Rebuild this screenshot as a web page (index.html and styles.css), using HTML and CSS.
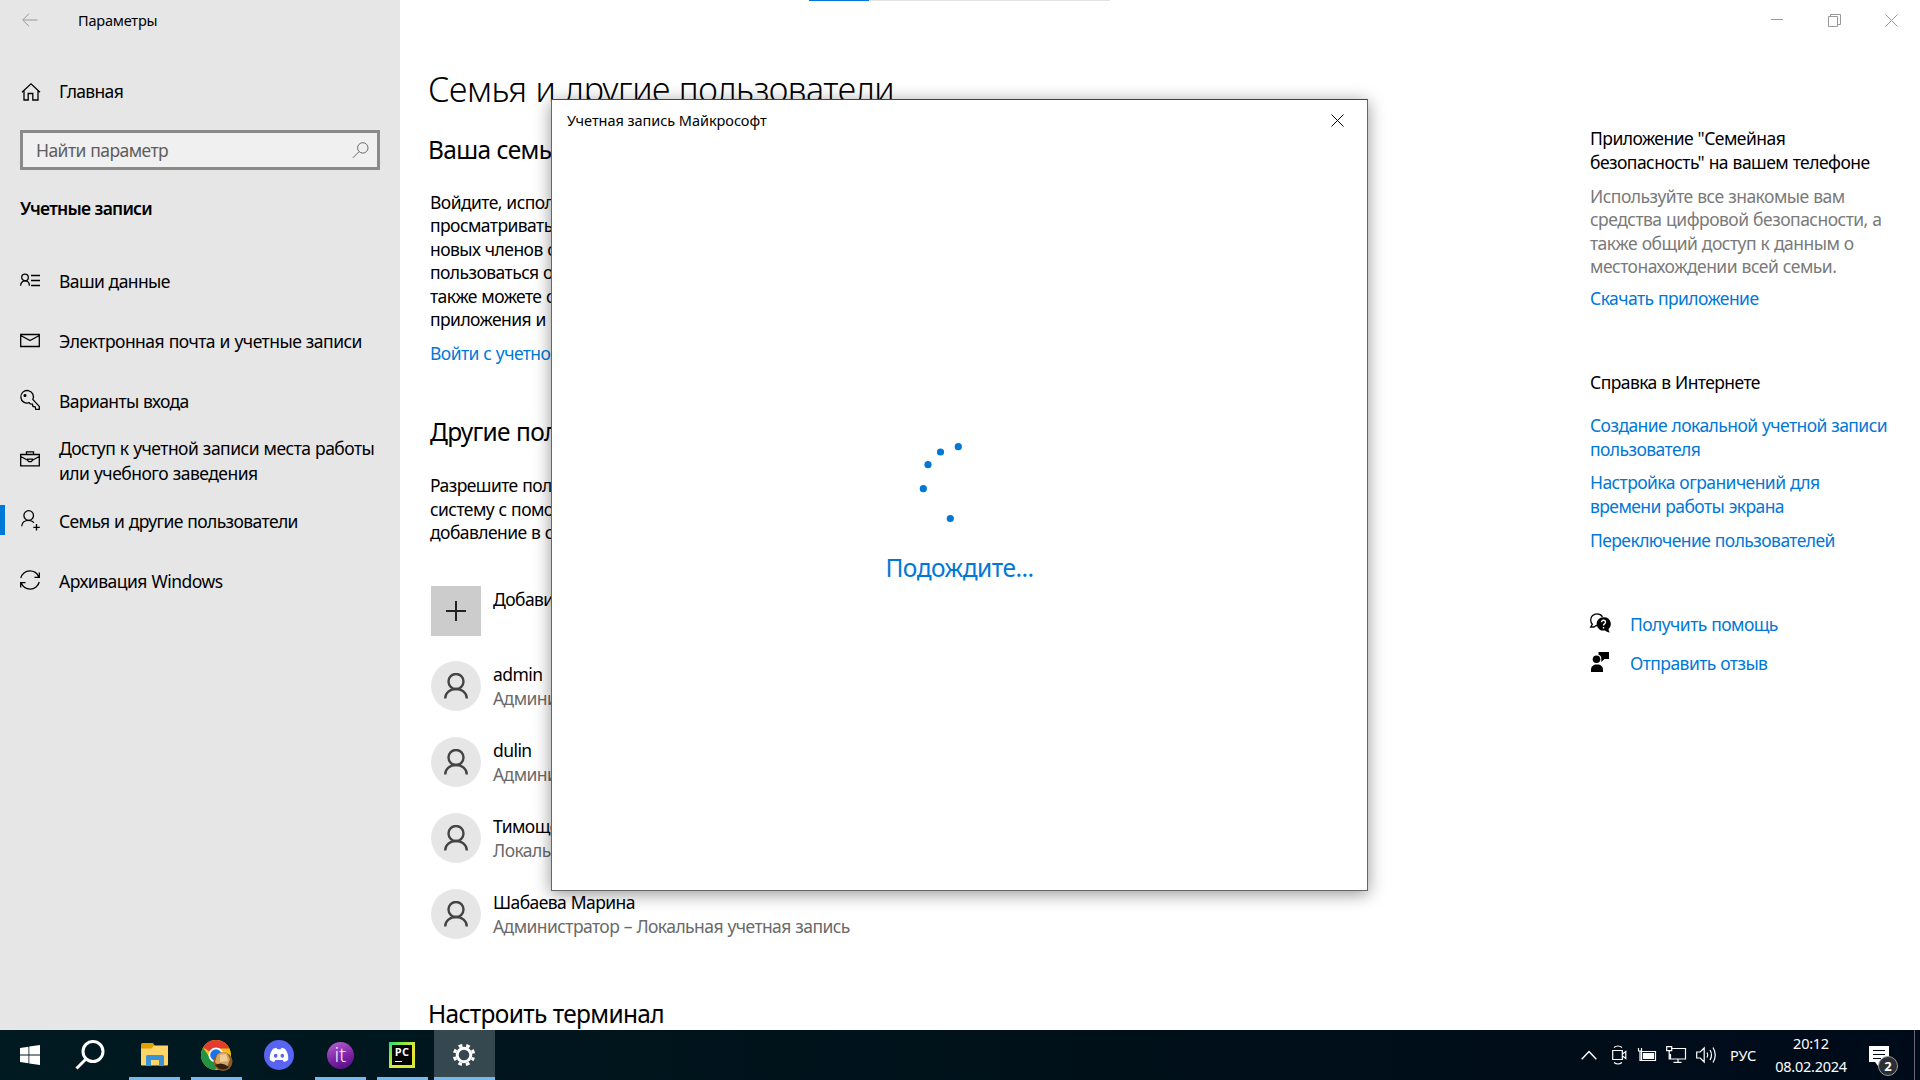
FILE: index.html
```html
<!DOCTYPE html>
<html lang="ru">
<head>
<meta charset="utf-8">
<title>Параметры</title>
<link rel="stylesheet" href="styles.css">
</head>
<body>
<svg class="defs" aria-hidden="true">
  <symbol id="person" viewBox="0 0 24 26"><circle cx="12" cy="8.5" r="7.5"/><path d="M1.2 25.5C1.2 20 6 16 12 16s10.800 4 10.800 9.500"/></symbol>
</svg>
<div class="window">
  <aside class="sidebar">
    <header class="titlebar">
      <svg class="back" width="16" height="14" viewBox="0 0 16 14"><path d="M15.500 7H1M7 .7.700 7 7 13.300"/></svg>
      <span>Параметры</span>
    </header>
    <a class="home">
      <svg class="ico" width="20" height="20" viewBox="0 0 20 20"><path d="M2 10.200 11 1.800l9 8.400M4 8.600V18h4.200v-6.500h4.600V18H18V8.600"/></svg>
      <span>Главная</span>
    </a>
    <div class="search">
      <span>Найти параметр</span>
      <svg width="17" height="17" viewBox="0 0 17 17"><circle cx="10.800" cy="5.900" r="5.200"/><path d="M7 9.700.8 15.900"/></svg>
    </div>
    <h2 class="group">Учетные записи</h2>
    <nav class="nav">
      <a class="item"><svg class="ico" width="20" height="20" viewBox="0 0 20 20"><circle cx="5" cy="7.500" r="3.300"/><path d="M.6 15.800c0-3 1.900-4.900 4.400-4.900s4.400 1.900 4.400 4.900M11 5.500h9M11 10.500h9M11 15.500h9"/></svg><span>Ваши данные</span></a>
      <a class="item"><svg class="ico" width="20" height="20" viewBox="0 0 20 20"><path d="M.7 4.500h18.600v12H.7zM.7 5.500l9.300 5 9.300-5"/></svg><span class="wide">Электронная почта и учетные записи</span></a>
      <a class="item"><svg class="ico" width="20" height="20" viewBox="0 0 20 20"><path d="M12.800 9.500a6.300 6.300 0 1 0-3.500 3.200l1 1.300 2.200.2.400 2.300 2.200.3.700 2.600h3.500v-3z"/><circle cx="5" cy="5.500" r=".9" fill="#000"/></svg><span>Варианты входа</span></a>
      <a class="item two"><svg class="ico" width="20" height="20" viewBox="0 0 20 20"><path d="M.7 4.500h18.600v11.300H.7zM6.500 4.500v-2.700h7v2.700M.7 6.500l7 3.800M12.300 10.300l7-3.800M7.700 9.200h4.600v1.400l-1.100 1.100H8.800l-1.100-1.100z"/></svg><span class="wide">Доступ к учетной записи места работы<br>или учебного заведения</span></a>
      <a class="item active"><svg class="ico" width="20" height="20" viewBox="0 0 20 20"><circle cx="8.700" cy="5.500" r="4.800"/><path d="M1.700 16.200c.2-3.700 3.200-5.900 7-5.900 2.300 0 4 .8 5.300 2.400M16.500 14v6.500M13.300 17.300h6.500"/></svg><span>Семья и другие пользователи</span></a>
      <a class="item"><svg class="ico" width="20" height="20" viewBox="0 0 20 20"><path d="M.8 8C1.700 4 5.300.9 9.800.9c4 0 7.500 2.400 9 6M19.300 2.500v4.800h-4.800M19.200 12c-.9 4-4.500 7.100-9 7.100-4 0-7.500-2.400-9-6M.7 17.500v-4.800h4.800"/></svg><span class="wide">Архивация Windows</span></a>
    </nav>
  </aside>

  <main class="content">
    <h1>Семья и другие пользователи</h1>
    <h2 class="family">Ваша семья</h2>
    <p class="intro">Войдите, используя<br>просматривать семью<br>новых членов семьи<br>пользоваться общим<br>также можете создать<br>приложения и игры</p>
    <a class="link">Войти с учетной записью</a>
    <h2 class="others">Другие пользователи</h2>
    <p class="note">Разрешите пользователям<br>систему с помощью<br>добавление в семью</p>
    <ul class="users">
      <li><div class="tile"><svg width="20" height="20" viewBox="0 0 20 20"><path d="M10 0v20M0 10h20"/></svg></div><div class="who"><b>Добавить</b></div></li>
      <li><div class="avatar"><svg width="24" height="26"><use href="#person"/></svg></div><div class="who"><b>admin</b><i>Администратор</i></div></li>
      <li><div class="avatar"><svg width="24" height="26"><use href="#person"/></svg></div><div class="who"><b>dulin</b><i>Администратор</i></div></li>
      <li><div class="avatar"><svg width="24" height="26"><use href="#person"/></svg></div><div class="who"><b>Тимощенко</b><i>Локальная</i></div></li>
      <li><div class="avatar"><svg width="24" height="26"><use href="#person"/></svg></div><div class="who"><b>Шабаева Марина</b><i>Администратор – Локальная учетная запись</i></div></li>
    </ul>
    <h2 class="kiosk">Настроить терминал</h2>
  </main>

  <aside class="related">
    <div class="controls">
      <svg width="12" height="14" viewBox="0 0 12 14"><path d="M0 6.500h12"/></svg>
      <svg width="13" height="13" viewBox="0 0 13 13"><path d="M.5 2.500h9v10h-9zM2.500 2.500v-2h10v10h-3"/></svg>
      <svg width="13" height="13" viewBox="0 0 13 13"><path d="m.5.5 12 12m0-12-12 12"/></svg>
    </div>
    <p class="app">Приложение "Семейная<br>безопасность" на вашем телефоне</p>
    <p class="hint">Используйте все знакомые вам<br>средства цифровой безопасности, а<br>также общий доступ к данным о<br>местонахождении всей семьи.</p>
    <a class="link get">Скачать приложение</a>
    <p class="web">Справка в Интернете</p>
    <a class="link multi">Создание локальной учетной записи<br>пользователя</a>
    <a class="link multi">Настройка ограничений для<br>времени работы экрана</a>
    <a class="link multi">Переключение пользователей</a>
    <div class="help">
      <svg width="20" height="20" viewBox="0 0 20 20"><path d="M7 12.500c-1.300 0-2 .5-3 1.500H.7l1.700-2.800C1.200 10.200.7 8.600.7 7c0-3.500 2.900-6.200 6.300-6.200 2.400 0 4.400 1.100 5.500 3" fill="none" stroke="#000" stroke-width="1.300"/><path d="M13.300 4.200a6.700 6.700 0 1 0 1.600 13.200c1 .8 2.800 1.700 4.900 2-.7-.9-1.200-2.200-1.300-3.500a6.700 6.700 0 0 0-5.200-11.700z"/><path d="M11.500 9.300c0-2.700 4-2.600 4 0 0 1.600-2 1.500-2 3.200M13.500 14v1.400" fill="none" stroke="#fff" stroke-width="1.400"/></svg>
      <a class="link">Получить помощь</a>
    </div>
    <div class="help">
      <svg width="20" height="20" viewBox="0 0 20 20"><path d="M8.500 0H19v7h-4.500l-3.200 3V7c0-2.700-1-3.700-2.800-4.200z"/><circle cx="6.500" cy="7.300" r="3.800"/><path d="M1 20v-2.500c0-3 2.300-5 6-5s6 2 6 5V20z"/></svg>
      <a class="link">Отправить отзыв</a>
    </div>
  </aside>

  <div class="snap"><div class="snap-on"></div></div>

  <section class="dialog">
    <header><span>Учетная запись Майкрософт</span><svg width="13" height="13" viewBox="0 0 13 13"><path d="m.5.5 12 12m0-12-12 12"/></svg></header>
    <div class="wait">
      <svg width="73" height="80" viewBox="0 0 73 80"><circle cx="35.300" cy="6.700" r="3.600"/><circle cx="17.500" cy="12" r="3.600"/><circle cx="5" cy="24.700" r="3.600"/><circle cx=".3" cy="48.700" r="3.600"/><circle cx="27.300" cy="78.500" r="3.600"/></svg>
      <span>Подождите...</span>
    </div>
  </section>
</div>

<footer class="taskbar">
  <div class="apps">
    <div class="app-btn start"><svg width="20" height="20" viewBox="0 0 20 20"><path d="M0 3l8.500-1.300v7.900H0zM9.300 1.500 20 0v9.600H9.300zM0 10.400h8.500v7.900L0 17zM9.300 10.400H20V20L9.300 18.500z"/></svg></div>
    <div class="app-btn find"><svg width="30" height="30" viewBox="0 0 30 30"><circle cx="18" cy="11.500" r="10"/><path d="M11 19 1.500 28.500"/></svg></div>
    <div class="app-btn open"><svg width="28" height="24" viewBox="0 0 28 24"><path d="M0 1.500Q0 0 1.500 0H12l2 3-2 4H0z" fill="#e0a000"/><path d="M0 5.500h10.500L13 2.500h14V21.500q0 1-1 1H1q-1 0-1-1z" fill="#ffd667"/><path d="M5 23v-9.500q0-1.500 1.500-1.500h15q1.500 0 1.500 1.500V23h-5v-6H10v6z" fill="#3a93d8"/></svg></div>
    <div class="app-btn open chrome"><svg width="32" height="32" viewBox="0 0 32 32"><circle cx="15" cy="15" r="15" fill="#fbc116"/><path d="M15 15 2 7.500A15 15 0 0 1 28.500 8.500H15z" fill="#e33b2e"/><path d="M2 7.500A15 15 0 0 0 14 30l7-11-12-1z" fill="#229342"/><circle cx="15" cy="15" r="7.500" fill="#fff"/><circle cx="15" cy="15" r="5.800" fill="#1a73e8"/><circle cx="22" cy="21.500" r="9.500" fill="#8a5a28"/><path d="M16 15q5-5 10-2l3 6-3 8-8-1-4-4z" fill="#d8a560"/><path d="M19 15l6-1 2 7-8 1z" fill="#f0cf96"/><path d="M14 25q7-4 14 2-7 6-14-2z" fill="#33200f"/></svg></div>
    <div class="app-btn"><svg width="30" height="30" viewBox="0 0 30 30"><circle cx="15" cy="15" r="15" fill="#5865f2"/><path d="M9 8.800l3.500-1 .8 1.400h3.400l.8-1.400 3.500 1C23.400 12 24.600 15.500 24.200 20c-1.500 1.100-2.900 1.700-4.300 2l-1.200-1.900h-7.400L10.100 22c-1.400-.3-2.800-.9-4.300-2-.4-4.500.8-8 3.200-11.200z" fill="#fff"/><ellipse cx="11.700" cy="15.800" rx="1.800" ry="2" fill="#5865f2"/><ellipse cx="18.300" cy="15.800" rx="1.800" ry="2" fill="#5865f2"/></svg></div>
    <div class="app-btn open"><div class="itbadge">it</div></div>
    <div class="app-btn open"><div class="pycharm"><span>PC</span></div></div>
    <div class="app-btn open current"><svg width="24" height="24" viewBox="0 0 24 24"><g fill="none" stroke="#fff"><circle cx="12" cy="12" r="6.800" stroke-width="3"/><circle cx="12" cy="12" r="9.700" stroke-width="3" stroke-dasharray="3.800 3.818" stroke-dashoffset="1.900" transform="rotate(22.500 12 12)"/></g></svg></div>
  </div>
  <div class="tray">
    <svg class="chev" width="16" height="10" viewBox="0 0 16 10"><path d="M.7 9.300 8 1.500l7.300 7.800"/></svg>
    <svg width="16" height="20" viewBox="0 0 16 20"><path d="M.7 5.500h9.600v9H.7zM10.500 9l3.300-2.500v7L10.500 11M2 2.500q4-3 8 0M2 17.500q4 3 8 0"/></svg>
    <svg width="20" height="16" viewBox="0 0 20 16"><path d="M4.500 4.500h14v9h-14zM1 4h4M3 4v5.500M1.500 1v3M4.500 1v3M3 9.500v4h2" /><path d="M6.500 6.500h10v5h-10z" fill="#fff"/></svg>
    <svg width="21" height="18" viewBox="0 0 21 18"><path d="M5 2.500h14.500v10.500H4.500V8M12 13v3M7.500 16.300h8M.7.700h5v4h-5zM3.200 4.700V13H5"/></svg>
    <svg width="21" height="18" viewBox="0 0 21 18"><path d="M.7 6h3.500l4-4v14l-4-4H.7zM11 6.500q1.500 2.500 0 5M14 4q3 5 0 10M17 1.500q4.500 7.500 0 15"/></svg>
    <span class="lang">РУС</span>
    <div class="clock"><span>20:12</span><span>08.02.2024</span></div>
    <div class="notes"><svg width="20" height="20" viewBox="0 0 20 20"><path d="M0 0h20v16h-7l-4 4-3-4H0z" fill="#fff" stroke="none"/><path d="M4 4.500h12M4 8.500h12M4 12.500h8" stroke="#000b1a"/></svg><span class="count">2</span></div>
    <div class="peek"></div>
  </div>
</footer>
</body>
</html>
```
FILE: styles.css
```css
* { box-sizing: border-box; margin: 0; padding: 0; }
body { width: 1920px; height: 1080px; overflow: hidden; background: #fff; color: #000; font: 400 17.5px "Noto Sans", "Open Sans", sans-serif; letter-spacing: -.57px; word-spacing: .5px; white-space: nowrap; }
.defs { position: absolute; width: 0; height: 0; }
svg { display: block; flex: none; overflow: visible; fill: none; stroke: #000; }
a { color: inherit; }
.window { position: relative; display: grid; grid-template-columns: 400px 1190px 330px; height: 1030px; overflow: hidden; }

.sidebar { background: #e6e6e6; display: flex; flex-direction: column; }
.titlebar { display: flex; align-items: center; height: 40px; padding-left: 22px; gap: 40px; font-size: 14.5px; letter-spacing: -.2px; }
.back { stroke: #999; margin-bottom: 1px; }
.home { display: flex; align-items: center; gap: 19px; height: 40px; margin-top: 31px; padding-left: 20px; }
.home span { letter-spacing: -.68px; }
.home svg { margin-top: 1px; }
.ico { stroke-width: 1.3; }
.search { display: flex; align-items: center; justify-content: space-between; height: 40px; margin: 19px 20px 0; padding: 0 8px 0 13px; border: 3px solid #8a8a8a; background: #f0f0f0; color: #5e5e5e; }
.search svg { stroke: #6a6a6a; }
.group { height: 30px; margin: 23px 0 27px 20px; font-size: 17.5px; font-weight: 600; line-height: 30px; letter-spacing: -.75px; }
.item { display: flex; align-items: center; gap: 19px; height: 60px; padding-left: 20px; }
.item span { line-height: 25px; padding-top: 3px; letter-spacing: -.61px; }
.item .wide { letter-spacing: -.52px; }
.two span { padding-top: 1px; }
.active { border-left: 5px solid; border-image: linear-gradient(transparent 15px, #0078d7 15px 45px, transparent 45px) 0 0 0 5; padding-left: 15px; }

.content { padding-left: 28px; display: flex; flex-direction: column; align-items: flex-start; }
h1 { font-size: 34px; font-weight: 300; line-height: 45px; letter-spacing: -.48px; margin-top: 67px; }
.content h2 { font-size: 24.5px; font-weight: 400; line-height: 30px; letter-spacing: -.68px; }
.content .family { margin-top: 23px; }
.intro, .note { line-height: 23.4px; padding-left: 2px; }
.intro { margin-top: 26px; }
.link { color: #0078d7; line-height: 24px; }
.content .link { margin: 10px 0 0 2px; }
.content .others { margin: 52px 0 0 2px; }
.note { margin-top: 27px; }
.users { list-style: none; display: flex; flex-direction: column; gap: 26px; margin: 41px 0 0 3px; }
.users li { display: flex; gap: 12px; height: 50px; }
.users li:first-child { margin-bottom: -1px; }
.tile, .avatar { width: 50px; height: 50px; display: grid; place-items: center; background: #ccc; }
.tile svg { stroke: #222; stroke-width: 2; }
.avatar { border-radius: 50%; background: #e6e6e6; }
.avatar svg { stroke: #444; stroke-width: 2.4; }
.who { display: flex; flex-direction: column; padding-top: 1.500px; line-height: 24px; }
.who b { font-weight: inherit; }
.who i { font-style: normal; color: #6a6a6a; }
.kiosk { margin-top: 60px; }

.related { display: flex; flex-direction: column; align-items: flex-start; }
.controls { display: flex; align-items: center; gap: 44.500px; height: 40px; margin-left: 181px; }
.controls svg { stroke: #999; }
.app { line-height: 24.3px; margin-top: 86px; letter-spacing: -.54px; }
.hint { line-height: 23.4px; color: #7a7a7a; margin-top: 10.300px; letter-spacing: -.52px; }
.get { margin-top: 7.200px; }
.web { line-height: 24px; margin-top: 60px; }
.multi { line-height: 24.2px; margin-top: 9px; letter-spacing: -.58px; }
.web + .multi { margin-top: 19px; }
.help { display: flex; align-items: flex-start; gap: 20px; height: 39px; }
.help svg { fill: #000; stroke: none; margin-top: 1px; }
.help a { margin-top: 0; }
.multi + .help { margin-top: 60px; }

.snap { position: absolute; left: 809px; top: 0; width: 301px; height: 1px; background: #e3e3e3; }
.snap-on { width: 60px; height: 1px; background: #0078d7; }

.dialog { position: absolute; left: 551px; top: 99px; width: 817px; height: 792px; border: 1px solid #666; border-top-color: #444; background: #fff; box-shadow: 0 3px 16px rgba(0, 0, 0, .42); display: flex; flex-direction: column; align-items: center; }
.dialog header { align-self: stretch; display: flex; align-items: center; justify-content: space-between; height: 40px; padding: 0 23px 0 15px; font-size: 14.5px; letter-spacing: -.05px; word-spacing: 0; }
.wait { display: flex; flex-direction: column; align-items: center; margin-top: 300px; }
.wait svg { fill: #0078d7; stroke: none; }
.wait span { font-size: 24.5px; line-height: 34px; letter-spacing: -.5px; color: #0078d7; margin-top: 31px; }

.taskbar { display: flex; justify-content: space-between; height: 50px; background: linear-gradient(90deg, #001a21, #001019 60%, #000b1a); color: #fff; }
.apps { display: flex; }
.app-btn { display: grid; place-items: center; width: 51px; height: 50px; margin-right: 11px; }
.apps svg { fill: #fff; stroke: none; }
.start { width: 60px; margin: 0; }
.find { width: 60px; margin-right: 9px; }
.apps .find svg { fill: none; stroke: #fff; stroke-width: 3; }
.open { border-bottom: 3px solid #76b9ed; padding-top: 3px; }
.chrome { padding: 4px 0 0 1px; }
.current { width: 61px; background: #35474f; margin: 0 0 0 -5px; padding-right: 2px; }
.itbadge { width: 27px; height: 27px; border-radius: 50%; background: linear-gradient(160deg, #b766d0, #7a1fa2 60%, #4b0f7a); font: 300 21px/25px "Open Sans", sans-serif; letter-spacing: 0; text-align: center; }
.pycharm { width: 26px; height: 26px; margin-right: 1px; background: linear-gradient(135deg, #21d789, #7bea3a 25%, #e8e83a 60%, #d5e82a); display: grid; place-items: center; }
.pycharm span { position: relative; width: 20px; height: 20px; background: #000; font: 700 11px/13px "Open Sans", sans-serif; letter-spacing: .2px; text-align: center; }
.pycharm span::after { content: ""; position: absolute; left: 3px; bottom: 3px; width: 7px; height: 1px; background: #fff; }
.tray { display: flex; align-items: center; }
.tray svg { stroke: #fff; stroke-width: 1.2; margin-right: 9px; }
.tray .chev { margin-right: 15px; stroke-width: 1.500; }
.lang { font-size: 14.5px; letter-spacing: .1px; margin-left: 4px; width: 46px; }
.clock { display: flex; flex-direction: column; align-items: center; width: 70px; font-size: 14.5px; line-height: 23px; letter-spacing: -.25px; padding-bottom: 1px; }
.notes { position: relative; width: 45px; margin-left: 23px; }
.notes svg { margin: 2px 0 0; }
.count { position: absolute; left: 9px; top: 12px; width: 20px; height: 20px; border: 1px solid #999; border-radius: 50%; background: #2b2e33; font: 700 13px/18px "Open Sans", sans-serif; letter-spacing: 0; text-align: center; }
.peek { width: 6px; height: 50px; border-left: 1px solid #667; }
```
